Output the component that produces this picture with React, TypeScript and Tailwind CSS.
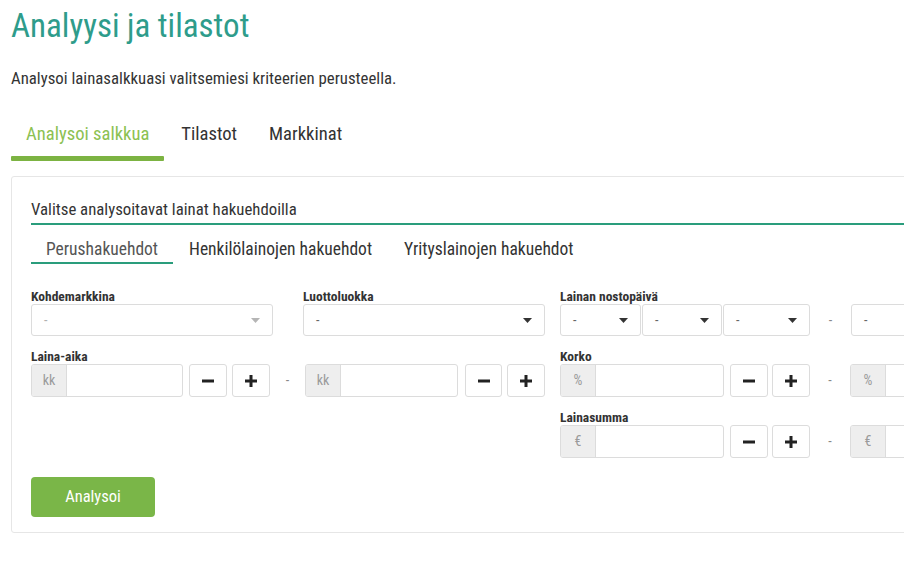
const FONT = { fontFamily: '"Roboto Condensed", "Liberation Sans", sans-serif' };

function Caret({ light }: { light?: boolean }) {
  return (
    <svg width="9" height="5" viewBox="0 0 9 5" className="shrink-0">
      <path d="M0 0 L9 0 L4.5 5 Z" fill={light ? "#b5b5b5" : "#333"} />
    </svg>
  );
}

function Select({ w, light, caret = true }: { w: string; light?: boolean; caret?: boolean }) {
  return (
    <div className={`${w} h-[32px] border border-[#dcdcdc] rounded-[3px] bg-white flex items-center justify-between pl-[12px] pr-[12px]`}>
      <span className={`text-[14px] ${light ? "text-[#b0b0b0]" : "text-[#666]"}`}>-</span>
      {caret && <Caret light={light} />}
    </div>
  );
}

function Addon({ label, w }: { label: string; w: string }) {
  return (
    <div className={`${w} h-[33px] flex border border-[#dcdcdc] rounded-[3px] overflow-hidden bg-white`}>
      <div className="w-[35px] shrink-0 bg-[#eeeeee] border-r border-[#dcdcdc] flex items-center justify-center text-[14px] text-[#9a9a9a]">
        {label}
      </div>
      <div className="flex-1" />
    </div>
  );
}

function Btn({ plus, w }: { plus?: boolean; w: string }) {
  return (
    <div className={`${w} h-[33px] border border-[#dcdcdc] rounded-[3px] bg-white flex items-center justify-center`}>
      <svg width="14" height="14" viewBox="0 0 14 14">
        <rect x="1" y="5.5" width="12" height="3" fill="#222" />
        {plus && <rect x="5.5" y="1" width="3" height="12" fill="#222" />}
      </svg>
    </div>
  );
}

function Label({ children }: { children: string }) {
  return <div className="h-[16px] leading-[16px] text-[13.5px] font-bold text-[#333]">{children}</div>;
}

function Dash({ w }: { w: string }) {
  return <div className={`${w} shrink-0 text-center text-[14px] text-[#888]`}>-</div>;
}

export default function App() {
  return (
    <div className="w-[904px] h-[573px] overflow-hidden bg-white" style={FONT}>
      <div className="pl-[11px]">
        <h1 className="text-[33px] leading-[40px] pt-[6px] text-[#2e9c8b] font-normal">Analyysi ja tilastot</h1>
        <p className="mt-[22px] text-[16.8px] leading-[20px] text-[#333]">
          Analysoi lainasalkkuasi valitsemiesi kriteerien perusteella.
        </p>
        <div className="mt-[34px] flex">
          <div className="flex flex-col">
            <div className="px-[15px] text-[18.6px] leading-[24px] text-[#8cc152]">Analysoi salkkua</div>
            <div className="mt-[10px] h-[5px] bg-[#7cb342] rounded-[1px]" />
          </div>
          <div className="px-[17px] text-[18.6px] leading-[24px] text-[#333]">Tilastot</div>
          <div className="px-[15px] text-[18.6px] leading-[24px] text-[#333]">Markkinat</div>
        </div>
        <div className="mt-[15px] w-[920px] h-[357px] border border-[#e6e6e6] rounded-[3px] pl-[19px] pt-[22px]">
          <div className="text-[16.8px] leading-[20px] text-[#333] pb-[4px] border-b-2 border-[#2a9d7c]">
            Valitse analysoitavat lainat hakuehdoilla
          </div>
          <div className="mt-[14px] flex text-[17.5px] leading-[20px] text-[#333]">
            <div className="px-[15px] pb-[3px] border-b-2 border-[#2a9d7c] text-[#555]">Perushakuehdot</div>
            <div className="px-[16px]">Henkilölainojen hakuehdot</div>
            <div className="px-[16px]">Yrityslainojen hakuehdot</div>
          </div>

          <div className="mt-[24px] flex">
            {/* left column */}
            <div className="w-[514px] shrink-0">
              <div className="flex gap-[30px]">
                <div>
                  <Label>Kohdemarkkina</Label>
                  <Select w="w-[242px]" light />
                </div>
                <div>
                  <Label>Luottoluokka</Label>
                  <Select w="w-[242px]" />
                </div>
              </div>
              <div className="mt-[12px]">
                <Label>Laina-aika</Label>
                <div className="flex items-center">
                  <Addon label="kk" w="w-[153px]" />
                  <div className="ml-[6px]"><Btn w="w-[38px]" /></div>
                  <div className="ml-[5px]"><Btn plus w="w-[38px]" /></div>
                  <Dash w="w-[35px]" />
                  <Addon label="kk" w="w-[154px]" />
                  <div className="ml-[7px]"><Btn w="w-[37px]" /></div>
                  <div className="ml-[5px]"><Btn plus w="w-[38px]" /></div>
                </div>
              </div>
            </div>
            {/* right column */}
            <div className="ml-[15px]">
              <Label>Lainan nostopäivä</Label>
              <div className="flex items-center">
                <Select w="w-[81px]" />
                <div className="ml-[1px]"><Select w="w-[80px]" /></div>
                <div className="ml-[1px]"><Select w="w-[87px]" /></div>
                <Dash w="w-[41px]" />
                <Select w="w-[120px]" caret={false} />
              </div>
              <div className="mt-[12px]">
                <Label>Korko</Label>
                <div className="flex items-center">
                  <Addon label="%" w="w-[164px]" />
                  <div className="ml-[6px]"><Btn w="w-[38px]" /></div>
                  <div className="ml-[4px]"><Btn plus w="w-[38px]" /></div>
                  <Dash w="w-[40px]" />
                  <Addon label="%" w="w-[120px]" />
                </div>
              </div>
              <div className="mt-[12px]">
                <Label>Lainasumma</Label>
                <div className="flex items-center">
                  <Addon label="€" w="w-[164px]" />
                  <div className="ml-[6px]"><Btn w="w-[38px]" /></div>
                  <div className="ml-[4px]"><Btn plus w="w-[38px]" /></div>
                  <Dash w="w-[40px]" />
                  <Addon label="€" w="w-[120px]" />
                </div>
              </div>
            </div>
          </div>

          <button className="mt-[19px] w-[124px] h-[40px] rounded-[4px] bg-[#7ab648] text-white text-[16.5px] leading-[20px]">
            Analysoi
          </button>
        </div>
      </div>
    </div>
  );
}
